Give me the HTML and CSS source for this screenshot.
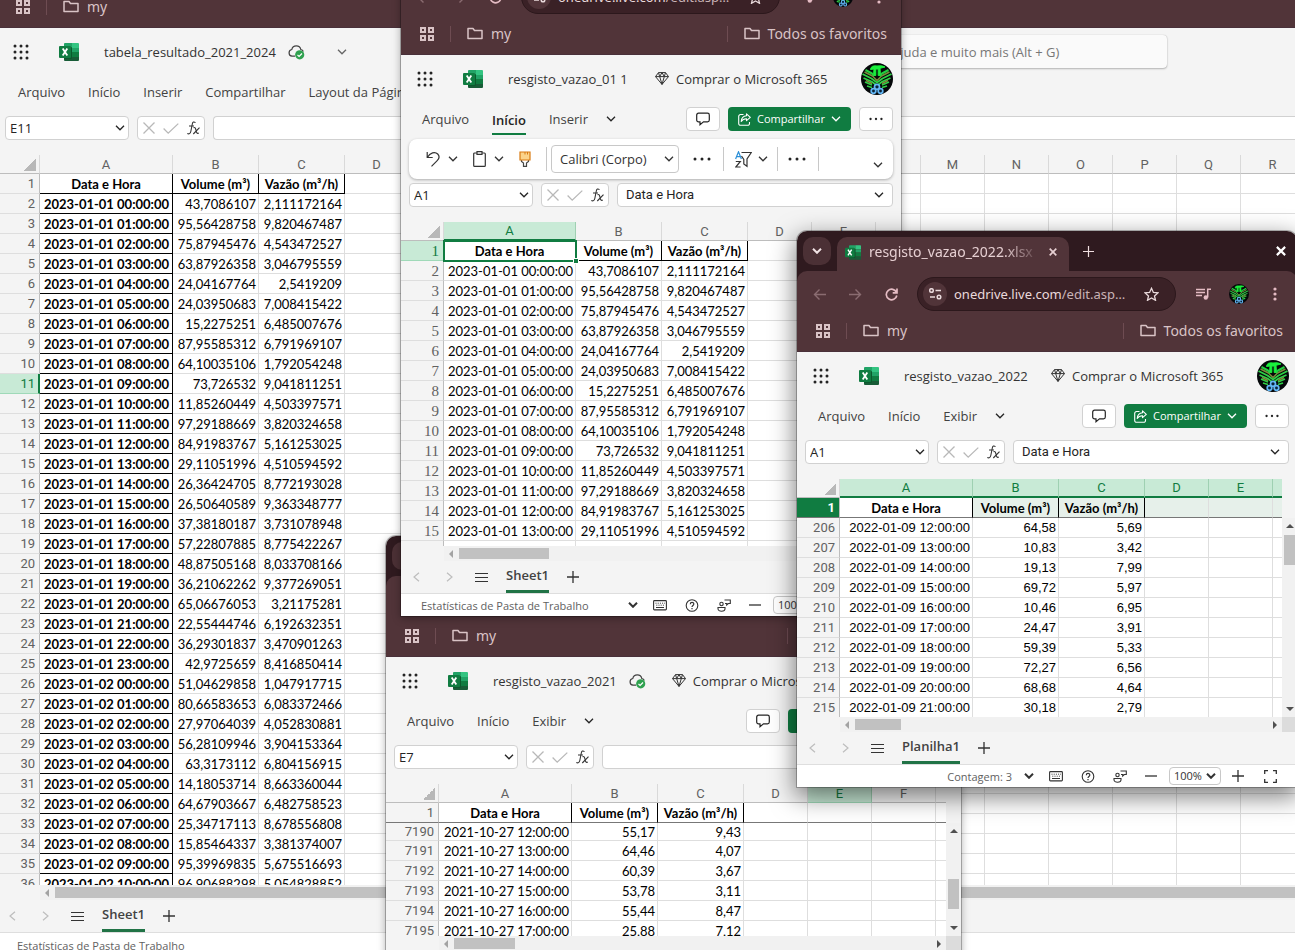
FILE: index.html
```html
<!DOCTYPE html>
<html lang="pt-BR">
<head>
<meta charset="utf-8">
<title>Planilhas de vazão</title>
<link rel="stylesheet" href="styles.css">
</head>
<body>
<svg class="defs" aria-hidden="true">
  <symbol id="i-apps" viewBox="0 0 14 14"><path d="M1 1h4v4H1zM9 1h4v4H9zM1 9h4v4H1zM9 9h4v4H9z" fill="none" stroke="currentColor" stroke-width="2"/></symbol>
  <symbol id="i-folder" viewBox="0 0 16 13"><path d="M1 1.5h5l1.5 2H15v8H1z" fill="none" stroke="currentColor" stroke-width="1.5" stroke-linejoin="round"/></symbol>
  <symbol id="i-waffle" viewBox="0 0 16 16"><g fill="#242424"><circle cx="2" cy="2" r="1.5"/><circle cx="8" cy="2" r="1.5"/><circle cx="14" cy="2" r="1.5"/><circle cx="2" cy="8" r="1.5"/><circle cx="8" cy="8" r="1.5"/><circle cx="14" cy="8" r="1.5"/><circle cx="2" cy="14" r="1.5"/><circle cx="8" cy="14" r="1.5"/><circle cx="14" cy="14" r="1.5"/></g></symbol>
  <symbol id="i-excel" viewBox="0 0 20 18"><path fill="#21a366" d="M5 1a1 1 0 0 1 1-1h7v5H5z"/><path fill="#33c481" d="M13 0h6a1 1 0 0 1 1 1v4h-7z"/><path fill="#107c41" d="M5 5h8v4H5z"/><path fill="#21a366" d="M13 5h7v4h-7z"/><path fill="#185c37" d="M5 9h8v9H6a1 1 0 0 1-1-1z"/><path fill="#107c41" d="M13 9h7v5h-7z"/><path fill="#185c37" d="M13 14h7v3a1 1 0 0 1-1 1h-6z"/><path fill="#0b5a2d" d="M5 4h7a1 1 0 0 1 1 1v10a1 1 0 0 1-1 1H5z"/><rect y="3" width="12" height="12" rx="1" fill="#107c41"/><path d="M3.7 5.5l4.6 7M8.3 5.5l-4.6 7" stroke="#fff" stroke-width="1.8" fill="none"/></symbol>
  <symbol id="i-cloud" viewBox="0 0 17 16"><path d="M7 12.2H4a3.4 3.4 0 0 1-.2-6.700A4.600 4.600 0 0 1 12.800 5.500 3 3 0 0 1 15.300 7.500" fill="none" stroke="#424242" stroke-width="1.200"/><circle cx="11.700" cy="10.800" r="4.600" fill="#2fa14f"/><path d="M9.500 11l1.600 1.500 2.900-3" fill="none" stroke="#fff" stroke-width="1.200"/></symbol>
  <symbol id="i-chev" viewBox="0 0 10 6"><path d="M1 .8l4 4 4-4" fill="none" stroke="currentColor" stroke-width="1.300"/></symbol>
  <symbol id="i-chev-bold" viewBox="0 0 10 6"><path d="M1 .8l4 4 4-4" fill="none" stroke="currentColor" stroke-width="2"/></symbol>
  <symbol id="i-left" viewBox="0 0 7 10"><path d="M6 .7L1 5l5 4.300" fill="none" stroke="currentColor" stroke-width="1.200"/></symbol>
  <symbol id="i-right" viewBox="0 0 7 10"><path d="M1 .7L6 5 1 9.300" fill="none" stroke="currentColor" stroke-width="1.200"/></symbol>
  <symbol id="i-gem" viewBox="0 0 14 13"><path d="M3.500.6h7l3 4L7 12.400.5 4.600zM.5 4.600h13M3.500.6l1.200 4L7 12.400l2.300-7.800 1.200-4M4.700 4.600L7 .6l2.300 4" fill="none" stroke="#333" stroke-width="1" stroke-linejoin="round"/></symbol>
  <symbol id="i-avatar" viewBox="0 0 32 32"><circle cx="16" cy="16" r="16" fill="#05080a"/><g fill="none" stroke-linejoin="round"><path d="M1.500 11l9 4.500 5.500 4 5.500-4 9-4.500M2.500 15l8 3.500 5.500 4 5.500-4 8-3.500M4 19l7 3M28 19l-7 3M6 23l5 1.500M26 23l-5 1.500" stroke="#2fd146" stroke-width="1.700"/><path d="M3.500 9l8 4 4.500 4.500 4.500-4.500 8-4M5 17.500l6 3M27 17.500l-6 3" stroke="#7d8c3c" stroke-width="1.500"/><path d="M9.500 6.500Q10 2 16 3q5-1 8 1l-5 1.300.5 7.200h-2.300V6h-2.400v6.500h-2.300L13 6z" fill="#19f03c" stroke="#19f03c"/><path d="M4.500 7l6.500 3.500 2 2.500M27.500 7L21 10.500 19 13" stroke="#23cf3f" stroke-width="2"/><g stroke="#63b7f5" stroke-width="1.700" fill="#0b2236"><circle cx="16" cy="23.800" r="2.500"/><circle cx="12.500" cy="28" r="2.300"/><circle cx="19.500" cy="28" r="2.300"/></g></g></symbol>
  <symbol id="i-comment" viewBox="0 0 14 13"><path d="M2.500.7h9a1.800 1.800 0 0 1 1.800 1.800v5a1.800 1.800 0 0 1-1.800 1.800H7.500L4 12.200V9.300H2.500A1.800 1.800 0 0 1 .7 7.500v-5A1.800 1.800 0 0 1 2.500.7z" fill="none" stroke="#242424" stroke-width="1.200"/></symbol>
  <symbol id="i-share" viewBox="0 0 13 13"><path d="M5.500 1.500h-3A1.800 1.800 0 0 0 .7 3.300v7.200a1.800 1.800 0 0 0 1.800 1.800h7.200a1.800 1.800 0 0 0 1.800-1.800V9M8.500.8l3.800 3.500-3.800 3.400V5.700C6 5.600 4.500 6.500 3.200 8.500 3.500 5 5.500 3 8.500 2.800z" fill="none" stroke="#fff" stroke-width="1.100" stroke-linejoin="round"/></symbol>
  <symbol id="i-more" viewBox="0 0 18 4"><g fill="#242424"><circle cx="2" cy="2" r="1.500"/><circle cx="9" cy="2" r="1.500"/><circle cx="16" cy="2" r="1.500"/></g></symbol>
  <symbol id="i-undo" viewBox="0 0 14 16"><path d="M1.200 1v5.500h5.500M1.500 6.300C4 1.500 9 .3 11.700 3c2 2.200 1.400 4.800-.5 6.600L5.500 15.300" fill="none" stroke="#333" stroke-width="1.200"/></symbol>
  <symbol id="i-paste" viewBox="0 0 13 16"><path d="M4 2H1.600a.9.900 0 0 0-.9.900v11.500a.9.900 0 0 0 .9.900h9.800a.9.900 0 0 0 .9-.9V2.900a.9.900 0 0 0-.9-.9H9M4 .7h5v2.600H4z" fill="none" stroke="#333" stroke-width="1.200"/></symbol>
  <symbol id="i-brush" viewBox="0 0 12 16"><path d="M2.500 9v1.500L4.500 12v3.400h3V12l2-1.500V9" fill="#fff" stroke="#444" stroke-width="1.200"/><path d="M1 1h10v8H1z" fill="#fbd38a" stroke="#d97b12" stroke-width="1.200"/><path d="M6 1v2.500M8.500 1v2.500" stroke="#d97b12"/></symbol>
  <symbol id="i-filter" viewBox="0 0 17 17"><path d="M.6 8L3.500.8 6.400 8M1.600 5.600h3.800" fill="none" stroke="#2b8fd8" stroke-width="1.200"/><path d="M.8 10.500h4.500L.8 16h4.800" fill="none" stroke="#333" stroke-width="1.200"/><path d="M6.500 1.500h9.800L12 8v7.300L8.800 13V8.500L6.500 5" fill="none" stroke="#333" stroke-width="1.200"/></symbol>
  <symbol id="i-x" viewBox="0 0 12 12"><path d="M.5.5l11 11M11.500.5l-11 11" stroke="#b8b8b8" stroke-width="1.300"/></symbol>
  <symbol id="i-check" viewBox="0 0 16 11"><path d="M.6 5.500l4.600 4.600L15.300.6" fill="none" stroke="#b8b8b8" stroke-width="1.300"/></symbol>
  <symbol id="i-fx" viewBox="0 0 13 14"><path d="M8.500 1.600C6.800.3 5.700 1 5.300 3L3.800 10.500c-.4 2.200-1.800 2.800-3.500 2M2 5h5M6.500 6.800c1.500-.8 2 .2 2.500 2.500s1 3.800 2.800 2.800M12.500 6.600L6.300 13" fill="none" stroke="#333" stroke-width="1.100"/></symbol>
  <symbol id="i-menu" viewBox="0 0 13 11"><path d="M0 1.500h13M0 5.500h13M0 9.500h13" stroke="#333"/></symbol>
  <symbol id="i-plus" viewBox="0 0 11 11"><path d="M5.500 0v11M0 5.500h11" stroke="currentColor" stroke-width="1.200"/></symbol>
  <symbol id="i-minus" viewBox="0 0 11 11"><path d="M0 5.500h11" stroke="#333" stroke-width="1.200"/></symbol>
  <symbol id="i-keyb" viewBox="0 0 14 11"><rect x=".6" y=".6" width="12.800" height="9.300" rx=".8" fill="none" stroke="#333" stroke-width="1.100"/><path d="M2.500 3.200h9.500M3.300 5.200h8" stroke="#333" stroke-dasharray="1 1.200"/><path d="M3 7.500h8" stroke="#333"/></symbol>
  <symbol id="i-help" viewBox="0 0 13 13"><circle cx="6.500" cy="6.500" r="5.800" fill="none" stroke="#333" stroke-width="1.100"/><path d="M4.800 5.200c0-2.400 3.500-2.300 3.500-.2 0 1.400-1.800 1.500-1.800 3M6.500 9v1.300" fill="none" stroke="#333" stroke-width="1.200"/></symbol>
  <symbol id="i-feed" viewBox="0 0 14 13"><path d="M1 8.500h7v1.300c0 3.300-7 3.300-7 0zM7.500 1h5.800v3.500h-2L9.700 6V4.500H8" fill="none" stroke="#333" stroke-width="1.100"/><circle cx="4.500" cy="5" r="1.700" fill="none" stroke="#333" stroke-width="1.100"/></symbol>
  <symbol id="i-full" viewBox="0 0 13 13"><path d="M.7 4V.7H4M9 .7h3.300V4M12.300 9v3.300H9M4 12.300H.7V9" fill="none" stroke="#333" stroke-width="1.300"/></symbol>
  <symbol id="i-back" viewBox="0 0 13 12"><path d="M13 6H1.500M6.500 1l-5 5 5 5" fill="none" stroke="currentColor" stroke-width="1.400"/></symbol>
  <symbol id="i-fwd" viewBox="0 0 13 12"><path d="M0 6h11.500M6.500 1l5 5-5 5" fill="none" stroke="currentColor" stroke-width="1.400"/></symbol>
  <symbol id="i-reload" viewBox="0 0 13 13"><path d="M11.500 4.500A5.300 5.300 0 1 0 11.800 7.500M12 .5v4.300H7.700" fill="none" stroke="currentColor" stroke-width="1.700"/></symbol>
  <symbol id="i-tune" viewBox="0 0 13 12"><g fill="none" stroke="currentColor" stroke-width="1.500"><circle cx="2.500" cy="2.500" r="1.800"/><path d="M6.500 2.500H12M1 9h5"/><circle cx="10" cy="9" r="1.800"/></g></symbol>
  <symbol id="i-star" viewBox="0 0 15 14"><path d="M7.500 1.300l1.900 4.200 4.500.4-3.400 3 1 4.400-4-2.300-4 2.300 1-4.400-3.400-3 4.500-.4z" fill="none" stroke="currentColor" stroke-width="1.300"/></symbol>
  <symbol id="i-queue" viewBox="0 0 15 12"><path d="M0 1.500h9M0 4.500h9M0 7.500h6" stroke="currentColor" stroke-width="1.400"/><path d="M11.700 9.500V1.200H15" fill="none" stroke="currentColor" stroke-width="1.500"/><circle cx="9.800" cy="9.500" r="2.200" fill="currentColor"/></symbol>
  <symbol id="i-dots" viewBox="0 0 4 14"><g fill="currentColor"><circle cx="2" cy="2" r="1.600"/><circle cx="2" cy="7" r="1.600"/><circle cx="2" cy="12" r="1.600"/></g></symbol>
  <symbol id="i-close" viewBox="0 0 8 8"><path d="M.7.7l6.600 6.600M7.300.7L.7 7.300" stroke="currentColor" stroke-width="1.700"/></symbol>
</svg>

<main class="desktop">
  <section class="window win-main" data-win="main">
    <div class="chrome">
      <div class="tabstrip"></div>
      <div class="toolbar"></div>
      <nav class="bookmarks"><svg class="s14"><use href="#i-apps"/></svg><i class="vbar"></i><a href="#"><svg class="s16"><use href="#i-folder"/></svg>my</a></nav>
    </div>
    <header class="head">
      <svg class="s16"><use href="#i-waffle"/></svg><svg class="logo"><use href="#i-excel"/></svg>
      <span class="doc-title">tabela_resultado_2021_2024</span><svg class="cloud"><use href="#i-cloud"/></svg><svg class="chev pale"><use href="#i-chev"/></svg>
      <input class="search" type="search" aria-label="Pesquisar" placeholder="Pesquise ferramentas, ajuda e muito mais (Alt + G)">
    </header>
    <nav class="menu"><a href="#">Arquivo</a><a href="#">Início</a><a href="#">Inserir</a><a href="#">Compartilhar</a><a href="#">Layout da Página</a></nav>
    <div class="formula">
      <label class="namebox"><input aria-label="Caixa de nome" value="E11"><svg class="chev"><use href="#i-chev"/></svg></label>
      <div class="fx"><svg class="s12"><use href="#i-x"/></svg><svg class="check"><use href="#i-check"/></svg><svg class="fxi"><use href="#i-fx"/></svg></div>
      <label class="fbox"><input aria-label="Barra de fórmulas" value=""></label>
    </div>
    <div class="grid"><div class="view"><table class="sheet" data-sheet="main"></table></div></div>
    <div class="hscroll"><i class="tri-l"></i><b class="thumb"></b></div>
    <footer class="tabs"><svg class="nav"><use href="#i-left"/></svg><svg class="nav"><use href="#i-right"/></svg><svg class="burger"><use href="#i-menu"/></svg><a href="#" class="sheet-tab">Sheet1</a><svg class="s12"><use href="#i-plus"/></svg></footer>
    <div class="status"><span class="stat-left">Estatísticas de Pasta de Trabalho</span></div>
  </section>

  <section class="window win-2021" data-win="2021">
    <div class="chrome">
      <div class="tabstrip"><span class="strip-btn"></span></div>
      <div class="toolbar"></div>
      <nav class="bookmarks"><svg class="s14"><use href="#i-apps"/></svg><i class="vbar"></i><a href="#"><svg class="s16"><use href="#i-folder"/></svg>my</a><i class="vbar push"></i><a href="#"><svg class="s16"><use href="#i-folder"/></svg>Todos os favoritos</a></nav>
    </div>
    <header class="head">
      <svg class="s16"><use href="#i-waffle"/></svg><svg class="logo"><use href="#i-excel"/></svg>
      <span class="doc-title">resgisto_vazao_2021</span><svg class="cloud"><use href="#i-cloud"/></svg>
      <a href="#" class="buy"><svg><use href="#i-gem"/></svg>Comprar o Microsoft 365</a><svg class="avatar"><use href="#i-avatar"/></svg>
    </header>
    <nav class="menu"><a href="#">Arquivo</a><a href="#">Início</a><a href="#">Exibir</a><svg class="chev"><use href="#i-chev"/></svg>
      <div class="acts"><button class="btn" aria-label="Comentários"><svg class="s14"><use href="#i-comment"/></svg></button><button class="share"><svg><use href="#i-share"/></svg>Compartilhar<svg class="chev"><use href="#i-chev"/></svg></button><button class="btn" aria-label="Mais"><svg class="more"><use href="#i-more"/></svg></button></div></nav>
    <div class="formula">
      <label class="namebox"><input aria-label="Caixa de nome" value="E7"><svg class="chev"><use href="#i-chev"/></svg></label>
      <div class="fx"><svg class="s12"><use href="#i-x"/></svg><svg class="check"><use href="#i-check"/></svg><svg class="fxi"><use href="#i-fx"/></svg></div>
      <label class="fbox"><input aria-label="Barra de fórmulas" value=""><svg class="chev"><use href="#i-chev"/></svg></label>
    </div>
    <div class="grid"><div class="view"><table class="sheet" data-sheet="2021"></table></div><div class="vscroll"><i class="tri-u"></i><b class="thumb"></b><i class="tri-d"></i></div></div>
    <div class="hscroll"><i class="tri-l"></i><b class="thumb"></b><i class="tri-r"></i><span class="corner"></span></div>
    <footer class="tabs"></footer>
    <div class="status"></div>
  </section>

  <section class="window win-01" data-win="01">
    <div class="chrome">
      <div class="tabstrip"></div>
      <div class="toolbar"><svg class="navi off"><use href="#i-back"/></svg><svg class="navi off"><use href="#i-fwd"/></svg><svg class="navi reload"><use href="#i-reload"/></svg>
        <div class="omni"><span class="site"><svg><use href="#i-tune"/></svg></span><span class="url">onedrive.live.com<em>/edit.asp…</em></span><svg class="star"><use href="#i-star"/></svg></div>
        <svg class="queue"><use href="#i-queue"/></svg><svg class="mini"><use href="#i-avatar"/></svg><svg class="kebab"><use href="#i-dots"/></svg></div>
      <nav class="bookmarks"><svg class="s14"><use href="#i-apps"/></svg><i class="vbar"></i><a href="#"><svg class="s16"><use href="#i-folder"/></svg>my</a><i class="vbar push"></i><a href="#"><svg class="s16"><use href="#i-folder"/></svg>Todos os favoritos</a></nav>
    </div>
    <header class="head">
      <svg class="s16"><use href="#i-waffle"/></svg><svg class="logo"><use href="#i-excel"/></svg>
      <span class="doc-title">resgisto_vazao_01 1</span>
      <a href="#" class="buy"><svg><use href="#i-gem"/></svg>Comprar o Microsoft 365</a><svg class="avatar"><use href="#i-avatar"/></svg>
    </header>
    <nav class="menu"><a href="#">Arquivo</a><a href="#" class="on">Início</a><a href="#">Inserir</a><svg class="chev"><use href="#i-chev"/></svg>
      <div class="acts"><button class="btn" aria-label="Comentários"><svg class="s14"><use href="#i-comment"/></svg></button><button class="share"><svg><use href="#i-share"/></svg>Compartilhar<svg class="chev"><use href="#i-chev"/></svg></button><button class="btn" aria-label="Mais"><svg class="more"><use href="#i-more"/></svg></button></div></nav>
    <div class="ribbon">
      <button aria-label="Desfazer"><svg class="r-undo"><use href="#i-undo"/></svg><svg class="chev"><use href="#i-chev"/></svg></button>
      <button aria-label="Colar"><svg class="r-paste"><use href="#i-paste"/></svg><svg class="chev"><use href="#i-chev"/></svg></button>
      <button aria-label="Pincel"><svg class="r-brush"><use href="#i-brush"/></svg></button>
      <i class="sep"></i>
      <span class="pick"><select aria-label="Fonte"><option>Calibri (Corpo)</option></select><svg class="chev"><use href="#i-chev"/></svg></span>
      <svg class="more"><use href="#i-more"/></svg><i class="sep"></i>
      <button aria-label="Classificar"><svg class="r-filter"><use href="#i-filter"/></svg><svg class="chev"><use href="#i-chev"/></svg></button>
      <i class="sep"></i><svg class="more"><use href="#i-more"/></svg><i class="sep"></i><svg class="chev last"><use href="#i-chev"/></svg>
    </div>
    <div class="formula">
      <label class="namebox"><input aria-label="Caixa de nome" value="A1"><svg class="chev"><use href="#i-chev"/></svg></label>
      <div class="fx"><svg class="s12"><use href="#i-x"/></svg><svg class="check"><use href="#i-check"/></svg><svg class="fxi"><use href="#i-fx"/></svg></div>
      <label class="fbox"><input aria-label="Barra de fórmulas" value="Data e Hora"><svg class="chev"><use href="#i-chev"/></svg></label>
    </div>
    <div class="grid"><div class="view"><table class="sheet" data-sheet="01"></table></div><div class="vscroll"></div></div>
    <div class="hscroll"><i class="tri-l"></i><b class="thumb"></b><i class="tri-r"></i><span class="corner"></span></div>
    <footer class="tabs"><svg class="nav"><use href="#i-left"/></svg><svg class="nav"><use href="#i-right"/></svg><svg class="burger"><use href="#i-menu"/></svg><a href="#" class="sheet-tab">Sheet1</a><svg class="s12"><use href="#i-plus"/></svg></footer>
    <div class="status"><span class="stat-left">Estatísticas de Pasta de Trabalho</span><div class="stat-tools"><svg class="chev"><use href="#i-chev-bold"/></svg><svg class="s14"><use href="#i-keyb"/></svg><svg class="s14"><use href="#i-help"/></svg><svg class="s14"><use href="#i-feed"/></svg><svg class="s12"><use href="#i-minus"/></svg><span class="zoom"><select aria-label="Zoom"><option>100%</option></select><svg class="chev"><use href="#i-chev-bold"/></svg></span><svg class="s12"><use href="#i-plus"/></svg><svg class="full"><use href="#i-full"/></svg></div></div>
  </section>

  <section class="window win-2022" data-win="2022">
    <div class="chrome">
      <div class="tabstrip"><button class="strip-btn" aria-label="Pesquisar guias"><svg class="chev"><use href="#i-chev-bold"/></svg></button>
        <div class="tab"><svg class="fav"><use href="#i-excel"/></svg><span class="tab-title">resgisto_vazao_2022.xlsx</span><svg class="s8"><use href="#i-close"/></svg></div>
        <svg class="newtab"><use href="#i-plus"/></svg><svg class="winclose"><use href="#i-close"/></svg></div>
      <div class="toolbar"><svg class="navi off"><use href="#i-back"/></svg><svg class="navi off"><use href="#i-fwd"/></svg><svg class="navi reload"><use href="#i-reload"/></svg>
        <div class="omni"><span class="site"><svg><use href="#i-tune"/></svg></span><span class="url">onedrive.live.com<em>/edit.asp…</em></span><svg class="star"><use href="#i-star"/></svg></div>
        <svg class="queue"><use href="#i-queue"/></svg><svg class="mini"><use href="#i-avatar"/></svg><svg class="kebab"><use href="#i-dots"/></svg></div>
      <nav class="bookmarks"><svg class="s14"><use href="#i-apps"/></svg><i class="vbar"></i><a href="#"><svg class="s16"><use href="#i-folder"/></svg>my</a><i class="vbar push"></i><a href="#"><svg class="s16"><use href="#i-folder"/></svg>Todos os favoritos</a></nav>
    </div>
    <header class="head">
      <svg class="s16"><use href="#i-waffle"/></svg><svg class="logo"><use href="#i-excel"/></svg>
      <span class="doc-title">resgisto_vazao_2022</span>
      <a href="#" class="buy"><svg><use href="#i-gem"/></svg>Comprar o Microsoft 365</a><svg class="avatar"><use href="#i-avatar"/></svg>
    </header>
    <nav class="menu"><a href="#">Arquivo</a><a href="#">Início</a><a href="#">Exibir</a><svg class="chev"><use href="#i-chev"/></svg>
      <div class="acts"><button class="btn" aria-label="Comentários"><svg class="s14"><use href="#i-comment"/></svg></button><button class="share"><svg><use href="#i-share"/></svg>Compartilhar<svg class="chev"><use href="#i-chev"/></svg></button><button class="btn" aria-label="Mais"><svg class="more"><use href="#i-more"/></svg></button></div></nav>
    <div class="formula">
      <label class="namebox"><input aria-label="Caixa de nome" value="A1"><svg class="chev"><use href="#i-chev"/></svg></label>
      <div class="fx"><svg class="s12"><use href="#i-x"/></svg><svg class="check"><use href="#i-check"/></svg><svg class="fxi"><use href="#i-fx"/></svg></div>
      <label class="fbox"><input aria-label="Barra de fórmulas" value="Data e Hora"><svg class="chev"><use href="#i-chev"/></svg></label>
    </div>
    <div class="grid"><div class="view"><table class="sheet" data-sheet="2022"></table></div><div class="vscroll"><i class="tri-u"></i><b class="thumb"></b><i class="tri-d"></i></div></div>
    <div class="hscroll"><i class="tri-l"></i><b class="thumb"></b><i class="tri-r"></i><span class="corner"></span></div>
    <footer class="tabs"><svg class="nav"><use href="#i-left"/></svg><svg class="nav"><use href="#i-right"/></svg><svg class="burger"><use href="#i-menu"/></svg><a href="#" class="sheet-tab">Planilha1</a><svg class="s12"><use href="#i-plus"/></svg></footer>
    <div class="status"><div class="stat-tools"><span>Contagem: 3</span><svg class="chev"><use href="#i-chev-bold"/></svg><svg class="s14"><use href="#i-keyb"/></svg><svg class="s14"><use href="#i-help"/></svg><svg class="s14"><use href="#i-feed"/></svg><svg class="s12"><use href="#i-minus"/></svg><span class="zoom"><select aria-label="Zoom"><option>100%</option></select><svg class="chev"><use href="#i-chev-bold"/></svg></span><svg class="s12"><use href="#i-plus"/></svg><svg class="full"><use href="#i-full"/></svg></div></div>
  </section>
</main>
<script src="sheets.js"></script>
</body>
</html>
```

FILE: sheets.js
```js
const readings2023 = [
  ['43,7086107', '2,111172164'], ['95,56428758', '9,820467487'], ['75,87945476', '4,543472527'],
  ['63,87926358', '3,046795559'], ['24,04167764', '2,5419209'], ['24,03950683', '7,008415422'],
  ['15,2275251', '6,485007676'], ['87,95585312', '6,791969107'], ['64,10035106', '1,792054248'],
  ['73,726532', '9,041811251'], ['11,85260449', '4,503397571'], ['97,29188669', '3,820324658'],
  ['84,91983767', '5,161253025'], ['29,11051996', '4,510594592'], ['26,36424705', '8,772193028'],
  ['26,50640589', '9,363348777'], ['37,38180187', '3,731078948'], ['57,22807885', '8,775422267'],
  ['48,87505168', '8,033708166'], ['36,21062262', '9,377269051'], ['65,06676053', '3,21175281'],
  ['22,55444746', '6,192632351'], ['36,29301837', '3,470901263'], ['42,9725659', '8,416850414'],
  ['51,04629858', '1,047917715'], ['80,66583653', '6,083372466'], ['27,97064039', '4,052830881'],
  ['56,28109946', '3,904153364'], ['63,3173112', '6,804156915'], ['14,18053714', '8,663360044'],
  ['64,67903667', '6,482758523'], ['25,34717113', '8,678556808'], ['15,85464337', '3,381374007'],
  ['95,39969835', '5,675516693'], ['96,90688298', '5,054828852']
];

// Adds the row number and the hourly time stamp to each reading.
function hourly(list, month, day, hour, firstRow) {
  return list.map((pair, i) => {
    const h = hour + i;
    const d = String(day + Math.floor(h / 24)).padStart(2, '0');
    return [firstRow + i, `${month}-${d} ${String(h % 24).padStart(2, '0')}:00:00`, ...pair];
  });
}

const sheets = {
  main: { letters: 'ABCDEFGHIJKLMNOPQR', rows: hourly(readings2023, '2023-01', 1, 0, 2), activeRow: 11 },
  '01': { letters: 'ABCDEF', rows: [...hourly(readings2023.slice(0, 14), '2023-01', 1, 0, 2), ['', '', '', '']], activeRow: 1, activeCols: 'A' },
  '2021': { letters: 'ABCDEFG', activeCols: 'E', rows: hourly([['55,17', '9,43'], ['64,46', '4,07'], ['60,39', '3,67'], ['53,78', '3,11'], ['55,44', '8,47'], ['25,88', '7,12']], '2021-10', 27, 12, 7190) },
  '2022': { letters: 'ABCDEF', activeRow: 1, activeCols: 'ABCDEF', rows: hourly([['64,58', '5,69'], ['10,83', '3,42'], ['19,13', '7,99'], ['69,72', '5,97'], ['10,46', '6,95'], ['24,47', '3,91'], ['59,39', '5,33'], ['72,27', '6,56'], ['68,68', '4,64'], ['30,18', '2,79']], '2022-01', 9, 12, 206) }
};

document.querySelectorAll('.sheet').forEach((table) => {
  const s = sheets[table.dataset.sheet];
  const letters = [...s.letters];
  const blanks = '<td></td>'.repeat(letters.length - 3);
  const on = (yes) => (yes ? ' class="on"' : '');
  const cols = letters.map((l) => `<col class="${l === 'A' ? 'c-a' : 'BC'.includes(l) ? 'c-b' : 'c-n'}">`).join('');
  const head = letters.map((l) => `<th scope="col"${on((s.activeCols || '').includes(l))}>${l}</th>`).join('');
  const title = `<tr class="title"><th scope="row"${on(s.activeRow === 1)}>1</th><td class="a">Data e Hora</td><td>Volume (m³)</td><td>Vazão (m³/h)</td>${blanks}</tr>`;
  const body = s.rows.map((r) => `<tr><th scope="row"${on(s.activeRow === r[0])}>${r[0]}</th><td class="a">${r[1]}</td><td>${r[2]}</td><td>${r[3]}</td>${blanks}</tr>`).join('');
  table.innerHTML = `<colgroup><col class="c-r">${cols}</colgroup><thead><tr><th class="all"></th>${head}</tr></thead><tbody>${title}${body}</tbody>`;
});
```

FILE: styles.css
```css
* { box-sizing: border-box; }
html, body { height: 100%; }
body { margin: 0; overflow: hidden; font: 13px/16px "Open Sans", "Noto Sans", sans-serif; color: #333; }
a { color: inherit; text-decoration: none; }
button, input, select { font: inherit; color: inherit; border: 0; background: none; padding: 0; margin: 0; appearance: none; outline: 0; min-width: 0; }
svg { display: block; flex: none; }
i { font-style: normal; }
.defs { position: absolute; width: 0; height: 0; }
.s8 { width: 8px; height: 8px; }
.s12 { width: 12px; height: 12px; }
.s14 { width: 14px; height: 14px; }
.s16 { width: 16px; height: 16px; }
.chev { width: 10px; height: 6px; }

.desktop { position: relative; height: 100vh; overflow: hidden; }
.window { --rowhead: 43px; position: absolute; display: flex; flex-direction: column; background: #f4f4f4; border-radius: 10px 10px 0 0; box-shadow: 0 0 0 1px rgba(0,0,0,.25), 0 2px 8px rgba(0,0,0,.35); }
.win-main { --rowhead: 40px; top: -93px; left: 0; right: 0; bottom: -5px; }
.win-2021 { --rowhead: 53px; top: 536px; left: 386px; width: 575px; height: 470px; }
.win-01 { top: -66px; left: 401px; width: 500px; height: 682px; }
.win-2022 { top: 231px; left: 797px; width: 500px; height: 556px; box-shadow: 0 0 0 1px rgba(0,0,0,.25), 0 8px 24px 2px rgba(0,0,0,.5); }

.chrome { background: #2f1a1f; border-radius: 10px 10px 0 0; color: #d9c3c6; font: 14px/20px "Noto Sans", sans-serif; overflow: hidden; flex: none; }
.tabstrip { height: 40px; display: flex; align-items: center; padding: 0 11px 0 6px; }
.strip-btn { width: 28px; height: 28px; border-radius: 10px; background: #4b3035; color: #f1e2e4; display: grid; place-items: center; }
.tab { align-self: flex-end; height: 34px; width: 232px; margin-left: 6px; padding: 0 12px 4px 8px; display: flex; align-items: center; gap: 8px; background: #513439; border-radius: 10px 10px 0 0; color: #e6cfd2; }
.fav { width: 16px; height: 15px; }
.tab-title { flex: 1; overflow: hidden; white-space: nowrap; -webkit-mask-image: linear-gradient(90deg, #000 78%, transparent); mask-image: linear-gradient(90deg, #000 78%, transparent); }
.newtab { width: 11px; height: 11px; margin-left: 14px; color: #f1dfe1; }
.winclose { width: 10px; height: 10px; margin-left: auto; color: #fff; }
.toolbar { height: 46px; display: flex; align-items: center; padding: 0 20px 0 16px; background: #513439; border-radius: 10px 10px 0 0; color: #e5bcc4; }
.navi { width: 13px; height: 13px; margin-right: 23px; }
.reload { margin-right: 19px; }
.off { color: #8a6c71; }
.omni { flex: 1; height: 34px; display: flex; align-items: center; padding: 0 16px 0 5px; border-radius: 17px; border: 1px solid #2c181c; background: #3a2126; color: #eadadc; }
.site { width: 24px; height: 24px; border-radius: 50%; background: #513439; display: grid; place-items: center; margin-right: 7px; }
.site svg { width: 13px; height: 12px; }
.url { flex: 1; font-size: 13px; white-space: nowrap; }
.url em { font-style: normal; color: #c9b3b6; }
.star { width: 15px; height: 14px; }
.queue { width: 15px; height: 12px; margin-left: 20px; }
.mini { width: 20px; height: 20px; margin-left: 18px; }
.kebab { width: 4px; height: 14px; margin-left: 24px; }
.bookmarks { height: 35px; display: flex; align-items: center; padding: 0 14px 7px 19px; background: #513439; border-bottom: 1px solid #49303a; }
.bookmarks a { display: flex; align-items: center; gap: 8px; }
.bookmarks .s16 { height: 13px; }
.vbar { width: 1px; height: 16px; margin: 0 16px; background: #6e4c52; }
.push { margin-left: auto; }
.win-main .bookmarks { padding-left: 16px; }

.head { flex: none; height: 47px; display: flex; align-items: center; padding: 0 8px 0 16px; }
.logo { width: 20px; height: 18px; margin: 0 25px 0 30px; }
.doc-title { min-width: 147px; }
.win-2021 .doc-title, .win-main .doc-title { min-width: 0; }
.win-main .head { padding: 0 128px 0 13px; }
.cloud { width: 17px; height: 16px; margin-left: 12px; }
.win-2021 .cloud { margin-right: 26px; }
.pale { margin-left: 32px; color: #666; }
.buy { display: flex; align-items: center; gap: 7px; white-space: nowrap; }
.buy svg { width: 14px; height: 13px; }
.avatar { width: 32px; height: 32px; margin-left: auto; }
.search { margin-left: auto; width: 467px; height: 33px; padding-left: 54px; background: #fafafa; border-radius: 4px; box-shadow: 0 1px 2px rgba(0,0,0,.25), 0 0 1px rgba(0,0,0,.25); }
.search::placeholder { color: #777; opacity: 1; }

.menu { flex: none; height: 30px; margin-top: 2px; display: flex; align-items: center; padding: 0 8px 0 21px; color: #424242; white-space: nowrap; }
.menu > a { margin-right: 23px; line-height: 20px; }
.menu > .on { font-weight: 600; border-bottom: 2px solid #107c41; margin-top: 6px; padding-bottom: 3px; color: #242424; }
.menu > .chev { margin-left: -5px; color: #242424; }
.win-main .menu { padding-left: 18px; }
.acts { margin-left: auto; display: flex; gap: 8px; }
.btn { width: 34px; height: 24px; border: 1px solid #d1d1d1; border-radius: 4px; background: #fff; display: grid; place-items: center; }
.btn .more { width: 14px; }
.more { width: 18px; height: 4px; }
.share { height: 24px; width: 123px; padding: 0 10px; border-radius: 4px; background: #107c41; color: #fff; font-size: 11px; display: flex; align-items: center; justify-content: space-between; }
.share svg:first-child { width: 13px; height: 13px; }

.ribbon { flex: none; height: 40px; margin: 5px 8px 0; padding: 0 10px 0 17px; display: flex; align-items: center; background: #fff; border-radius: 8px; box-shadow: 0 1px 3px rgba(0,0,0,.3); }
.ribbon button { display: flex; align-items: center; gap: 8px; margin-right: 15px; }
.r-undo { width: 14px; height: 16px; }
.r-paste { width: 13px; height: 16px; }
.r-brush { width: 12px; height: 16px; }
.r-filter { width: 17px; height: 17px; }
.sep { width: 1px; height: 24px; background: #c8c8c8; }
.pick { position: relative; width: 128px; height: 28px; margin: 0 14px 0 4px; border: 1px solid #c8c8c8; border-radius: 4px; display: flex; align-items: center; padding: 0 4px 0 8px; }
.pick select { flex: 1; }
.ribbon .more { margin-right: 12px; }
.ribbon .sep + button { margin-left: 11px; margin-right: 9px; gap: 6px; }
.ribbon .sep + .more { margin-left: 10px; }
.last { margin-left: auto; margin-top: 12px; }

.formula { flex: none; display: flex; gap: 8px; height: 24px; margin: 9px 8px 15px; color: #242424; }
.ribbon + .formula { margin-top: 4px; }
.win-main .formula { margin: 9px 0 15px 5px; }
.formula > * { border: 1px solid #d1d1d1; border-radius: 4px; background: #fff; display: flex; align-items: center; }
.namebox { width: 124px; padding: 0 3px 0 4px; }
.namebox input, .fbox input { flex: 1; width: 0; height: 20px; }
.fx { width: 68px; gap: 8px; padding: 0 5px; }
.check { width: 16px; height: 11px; }
.fxi { width: 13px; height: 14px; }
.fbox { flex: 1; padding: 0 8px; }
.fbox input { font: 13px/20px Roboto, sans-serif; }
.win-main .fbox { border-right: 0; border-radius: 4px 0 0 4px; }

.grid { flex: 1; min-height: 0; display: flex; }
.view { flex: 1; min-width: 0; overflow: hidden; }
.sheet { table-layout: fixed; width: 0; border-collapse: separate; border-spacing: 0; font: 13px/18px Lato, sans-serif; color: #000; white-space: nowrap; }
.c-r { width: var(--rowhead); }
.c-a { width: 133px; }
.win-01 .c-a { width: 132px; }
.c-b { width: 86px; }
.c-n { width: 64px; }
.sheet th { font: 13px/17px Roboto, sans-serif; color: #616161; background: #f4f4f4; padding: 0; }
.sheet thead th { height: 19px; border-right: 1px solid #d9d9d9; border-bottom: 1px solid #bdbdbd; }
.sheet tbody th { height: 20px; border-right: 1px solid #bdbdbd; border-bottom: 1px solid #dedede; text-align: right; padding-right: 4px; }
.sheet td { background: #fff; border-right: 1px solid #dedede; border-bottom: 1px solid #dedede; padding: 0 2px; text-align: right; overflow: hidden; }
.sheet .all { background: linear-gradient(135deg, transparent 50%, #b8b8b8 50%) right 3px top 4px / 12px 12px no-repeat #f4f4f4; }
.sheet .title td { font-weight: 700; text-align: center; padding: 0; }
.title td:nth-child(-n+4) { border-right-color: #000; border-bottom-color: #000; }
.sheet .on { background: #c8ead6; color: #107c41; border-bottom-color: #9fd9b8; }
.sheet thead .on { border-right-color: #9fd0b2; }

.win-main .a { font-weight: 700; border-color: #000; padding-right: 3px; }
.win-main tbody .on { border-right: 2px solid #107c41; padding-right: 3px; }

.win-01 tbody th { font: 15px/18px "Liberation Serif", serif; }
.win-01 thead .on { border-bottom: 2px solid #107c41; line-height: 16px; }
.win-01 .title .a { position: relative; overflow: visible; }
.win-01 .title .a::before { content: ""; position: absolute; inset: -1px -2px -2px -1px; border: 2px solid #107c41; }
.win-01 .title .a::after { content: ""; position: absolute; right: -3px; bottom: -3px; width: 4px; height: 4px; background: #107c41; outline: 1px solid #fff; }

.sheet[data-sheet="2021"] .title > *, .sheet[data-sheet="2022"] .title > * { border-bottom-color: #777; }
.win-2021 .title + tr > * { height: 18px; line-height: 16px; }
.win-2021 .title + tr > th { height: 18px; }
.win-2022 thead .on { border-bottom: 2px solid #107c41; line-height: 16px; }
.win-2022 .title td { background: #e6f0ea; }
.win-2022 .title .a { background: #fff; }
.win-2022 tbody .on { background: #107c41; color: #fff; font-weight: 700; }
.win-2022 tbody td { font-family: "Liberation Sans", sans-serif; }
.win-2022 .title td { font-family: Lato, sans-serif; }

.thumb { display: block; background: #c1c1c1; }
.vscroll { width: 15px; margin-top: 39px; background: #f1f1f1; display: flex; flex-direction: column; align-items: center; padding: 6px 0; }
.vscroll .thumb { width: 11px; height: 30px; margin-top: 7px; }
.win-2021 .vscroll .thumb { margin-top: 46px; }
.tri-u { border: 4px solid transparent; border-top: 0; border-bottom-color: #505050; }
.tri-d { border: 4px solid transparent; border-bottom: 0; border-top-color: #505050; margin-top: auto; }
.hscroll { flex: none; height: 15px; margin-left: var(--rowhead); padding-left: 5px; background: #f1f1f1; display: flex; align-items: center; }
.hscroll .thumb { width: 46px; height: 11px; margin-left: 6px; }
.win-01 .hscroll .thumb { width: 90px; }
.win-2021 .hscroll .thumb { width: 61px; }
.win-main .hscroll .thumb { flex: 1; }
.tri-l { border: 4px solid transparent; border-left: 0; border-right-color: #a3a3a3; }
.tri-r { border: 4px solid transparent; border-right: 0; border-left-color: #505050; margin-left: auto; margin-right: 5px; }
.corner { align-self: stretch; width: 15px; background: #dcdcdc; }

.tabs { flex: none; height: 33px; display: flex; align-items: center; border-bottom: 1px solid #dedede; padding-left: 12px; color: #333; }
.win-main .tabs { padding-left: 9px; }
.nav { width: 7px; height: 10px; margin-right: 26px; color: #bdbdbd; }
.burger { width: 13px; height: 11px; margin: 0 18px 0 -4px; }
.sheet-tab { height: 32px; line-height: 28px; font-weight: 600; color: #424242; border-bottom: 3px solid #217346; margin-right: 18px; }
.status { flex: none; height: 22px; background: #fff; display: flex; align-items: center; padding: 0 20px; font-size: 11px; color: #616161; }
.stat-left, .stat-tools > span:first-child { padding-top: 2px; }
.win-main .status { padding: 2px 0 0 17px; }
.stat-tools { margin-left: auto; display: flex; align-items: center; color: #333; }
.stat-tools > span:first-child { margin-right: 12px; color: #616161; }
.stat-tools .s14 { margin-left: 18px; height: 13px; }
.stat-tools .chev + .s14 { margin-left: 15px; }
.stat-tools > .s12 { margin-left: 18px; }
.zoom { width: 52px; height: 18px; margin: 0 -7px 0 12px; padding: 0 4px; border: 1px solid #c8c8c8; border-radius: 4px; display: flex; align-items: center; }
.zoom select { flex: 1; }
.full { width: 13px; height: 13px; margin-left: 20px; }
```
